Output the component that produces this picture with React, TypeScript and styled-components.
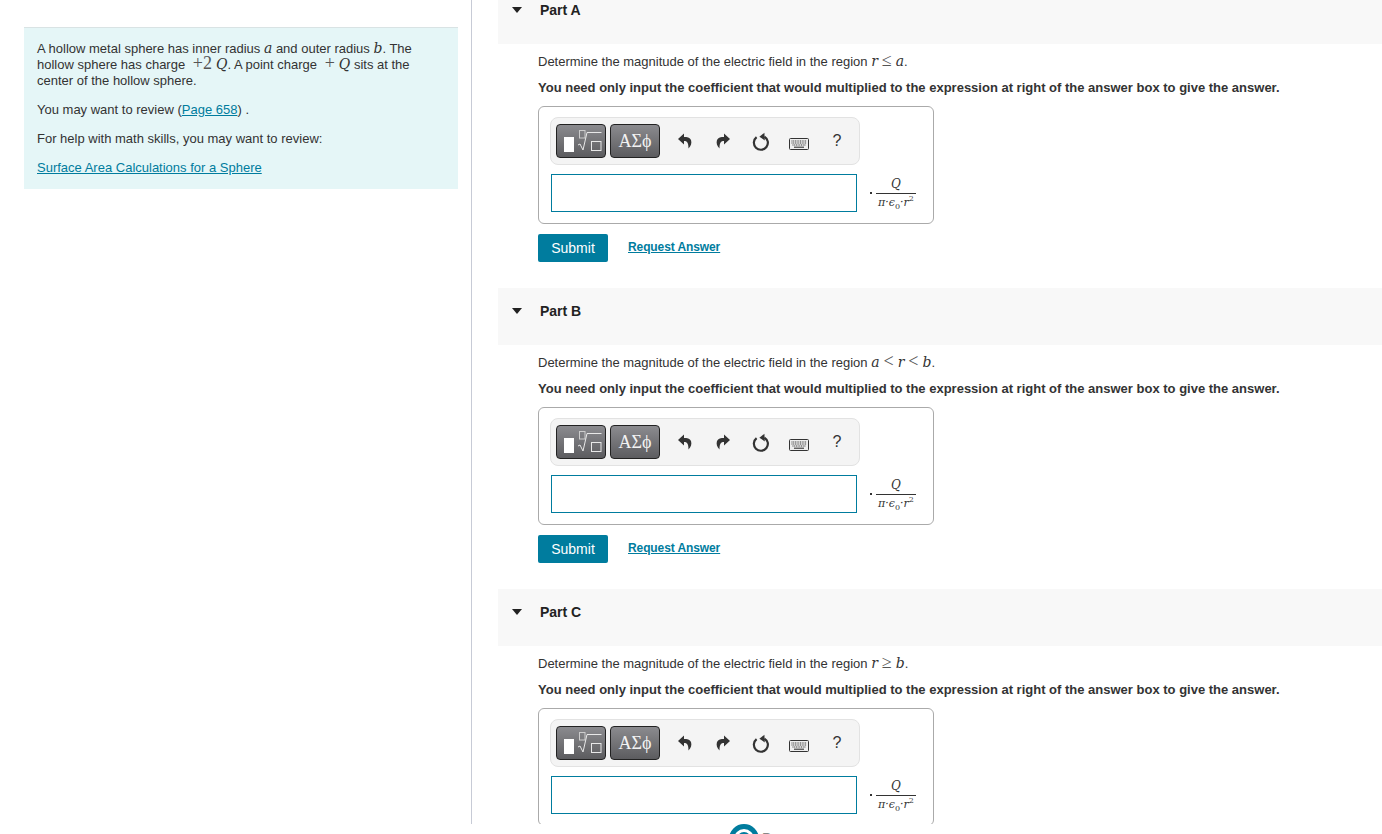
import React from "react";
import styled, { createGlobalStyle } from "styled-components";

const GlobalStyle = createGlobalStyle`
  html, body {
    margin: 0;
    height: 834px;
    overflow: hidden;
    background: #fff;
  }
  body {
    font-family: "Liberation Sans", Arial, sans-serif;
    font-size: 13px;
    color: #333;
  }
`;

const Main = styled.div`
  display: flex;
  height: 824px;
  overflow: hidden;
`;

const Sidebar = styled.aside`
  width: 472px;
  flex: none;
  box-sizing: border-box;
  padding: 27px 13px 0 24px;
  border-right: 1px solid #c7cbd6;
`;

const InfoPanel = styled.div`
  background: #e5f6f7;
  border-top: 1px solid #d9e3e4;
  padding: 13px 26px 13px 13px;
  line-height: 16px;
  font-size: 13px;
  color: #333;
`;

const InfoText = styled.p`
  margin: 0 0 13px;
  &:last-child {
    margin-bottom: 0;
  }
`;

const Link = styled.a`
  color: #007c9e;
  text-decoration: underline;
`;

const Content = styled.main`
  flex: 1;
  min-width: 0;
  padding-left: 26px;
  margin-top: -13px;
`;

const Section = styled.section`
  padding-bottom: 26px;
`;

const PartHeader = styled.div`
  display: flex;
  align-items: flex-start;
  height: 57px;
  box-sizing: border-box;
  padding: 15px 0 0 14px;
  background: #f8f8f8;
`;

const Caret = styled.span`
  width: 0;
  height: 0;
  margin-top: 5px;
  border-left: 5px solid transparent;
  border-right: 5px solid transparent;
  border-top: 6px solid #222;
`;

const PartTitle = styled.h2`
  margin: 0 0 0 18px;
  font-size: 14px;
  line-height: 16px;
  font-weight: 700;
  color: #222;
`;

const PartBody = styled.div`
  padding: 10px 0 0 40px;
`;

const Prompt = styled.p`
  margin: 0;
  line-height: 16px;
  font-size: 13px;
`;

const Instruction = styled.p`
  margin: 10px 0 10px;
  line-height: 16px;
  font-size: 13px;
  font-weight: 700;
`;

const Var = styled.span`
  font-family: "DejaVu Serif", "Liberation Serif", serif;
  font-style: italic;
  font-size: 14px;
  line-height: 0;
`;

const Rel = styled.span`
  font-family: "Liberation Serif", "DejaVu Serif", serif;
  font-size: 18px;
  line-height: 0;
  margin: 0 4px;
  color: #555;
`;

const AnswerBox = styled.div`
  width: 396px;
  height: 118px;
  box-sizing: border-box;
  padding: 10px 11px;
  border: 1px solid #aaa;
  border-radius: 6px;
`;

const Toolbar = styled.div`
  display: flex;
  align-items: center;
  width: 310px;
  height: 48px;
  box-sizing: border-box;
  padding-left: 5px;
  background: #f4f4f4;
  border: 1px solid #e2e2e2;
  border-radius: 8px;
`;

const ToolButton = styled.button`
  display: flex;
  align-items: center;
  justify-content: center;
  width: 50px;
  height: 34px;
  padding: 0;
  margin-right: 4px;
  border: 1px solid #222;
  border-radius: 4px;
  background: linear-gradient(#8b8b8f, #5c5c5f);
  color: #f2f2f2;
  font-family: "Liberation Serif", "DejaVu Serif", serif;
  font-size: 18px;
`;

const ToolIcon = styled.span`
  display: flex;
  align-items: center;
  justify-content: center;
  width: 38px;
  height: 34px;
  color: #333;
  font-size: 16px;
  &:nth-of-type(1) {
    margin-left: 2px;
  }
`;

const KeyboardSvg = styled.svg`
  margin-top: 5px;
`;

const AnswerRow = styled.div`
  display: flex;
  align-items: center;
  margin-top: 9px;
`;

const AnswerInput = styled.input`
  width: 306px;
  height: 38px;
  box-sizing: border-box;
  margin: 0 0 0 1px;
  border: 1px solid #007c9e;
  background: #fff;
`;

const Unit = styled.div`
  display: flex;
  align-items: center;
  margin-left: 13px;
  font-family: "DejaVu Serif", "Liberation Serif", serif;
  color: #333;
`;

const Dot = styled.span`
  width: 2px;
  height: 2px;
  margin-right: 4px;
  background: #333;
`;

const Fraction = styled.div`
  display: flex;
  flex-direction: column;
  align-items: center;
  width: 40px;
`;

const Numerator = styled.span`
  font-style: italic;
  font-size: 12px;
  line-height: 17px;
  border-bottom: 1px solid #333;
  width: 100%;
  text-align: center;
`;

const Denominator = styled.span`
  font-style: italic;
  font-size: 11px;
  line-height: 17px;
  white-space: nowrap;
  sub, sup {
    font-style: normal;
    font-size: 8px;
    line-height: 0;
  }
`;

const Actions = styled.div`
  display: flex;
  align-items: center;
  gap: 20px;
  margin-top: 10px;
`;

const Submit = styled.button`
  width: 70px;
  height: 28px;
  padding: 0;
  border: 0;
  border-radius: 2px;
  background: #007c9e;
  color: #fff;
  font-family: "Liberation Sans", Arial, sans-serif;
  font-size: 14px;
`;

const RequestLink = styled(Link)`
  font-size: 12px;
  font-weight: 700;
  letter-spacing: -0.1px;
  margin-top: -2px;
`;

const Footer = styled.footer`
  display: flex;
  gap: 3px;
  height: 10px;
  overflow: hidden;
  padding-left: 729px;
`;

const FooterName = styled.span`
  font-size: 14px;
  line-height: 16px;
  margin-top: 6px;
  color: #888;
`;

const UndoIcon = ({ flip }: { flip?: boolean }) => (
  <svg width="14" height="16" viewBox="0 0 14 16" style={flip ? { transform: "scaleX(-1)" } : undefined}>
    <path
      fill="currentColor"
      d="M6 0.5 0 6 6 11.5V8C9 8 10.5 9.5 10.5 15.5 13 13 14 10 13 7 12 4.5 9 4 6 4Z"
    />
  </svg>
);

const RefreshIcon = () => (
  <svg width="18" height="19" viewBox="0 0 18 19">
    <path d="M12.4 4.7A7 7 0 1 1 4.6 5.2" fill="none" stroke="currentColor" strokeWidth="2.2" />
    <path d="M7.4 4.8 12.4 0.8 12.8 8.4Z" fill="currentColor" />
  </svg>
);

const KeyboardIcon = () => (
  <KeyboardSvg width="20" height="12" viewBox="0 0 20 12">
    <rect x="0.5" y="0.5" width="19" height="11" rx="1" fill="#eee" stroke="#333" />
    <path
      d="M2.5 3h15M2.5 5h15M3.5 7h13"
      stroke="#333"
      strokeWidth="1.2"
      strokeDasharray="1 .7"
      fill="none"
    />
    <path d="M5 9.2h10" stroke="#333" strokeWidth="1.1" fill="none" />
  </KeyboardSvg>
);

const TemplateIcon = () => (
  <svg width="46" height="28" viewBox="0 0 46 28">
    <rect x="6" y="10" width="10" height="15" fill="#fff" />
    <rect x="21.5" y="3.5" width="5.5" height="7.5" fill="none" stroke="#ccc" />
    <path d="M20 18 22 17 25 23 29 5.5H43.5" fill="none" stroke="#e8e8e8" />
    <rect x="33.5" y="14.5" width="9.5" height="9" fill="none" stroke="#e8e8e8" />
  </svg>
);

const PearsonLogo = () => (
  <svg width="30" height="30" viewBox="0 0 30 30">
    <circle cx="15" cy="15" r="12.5" fill="none" stroke="#007c9e" strokeWidth="5" />
    <circle cx="15" cy="15" r="5.5" fill="none" stroke="#007c9e" strokeWidth="3" />
  </svg>
);

type PartProps = {
  name: string;
  region: React.ReactNode;
};

const instruction =
  "You need only input the coefficient that would multiplied to the expression at right of the answer box to give the answer.";

function Part({ name, region }: PartProps) {
  return (
    <Section>
      <PartHeader>
        <Caret />
        <PartTitle>{name}</PartTitle>
      </PartHeader>
      <PartBody>
        <Prompt>Determine the magnitude of the electric field in the region {region}.</Prompt>
        <Instruction>{instruction}</Instruction>
        <AnswerBox>
          <Toolbar>
            <ToolButton>
              <TemplateIcon />
            </ToolButton>
            <ToolButton>ΑΣϕ</ToolButton>
            <ToolIcon>
              <UndoIcon />
            </ToolIcon>
            <ToolIcon>
              <UndoIcon flip />
            </ToolIcon>
            <ToolIcon>
              <RefreshIcon />
            </ToolIcon>
            <ToolIcon>
              <KeyboardIcon />
            </ToolIcon>
            <ToolIcon>?</ToolIcon>
          </Toolbar>
          <AnswerRow>
            <AnswerInput />
            <Unit>
              <Dot />
              <Fraction>
                <Numerator>Q</Numerator>
                <Denominator>
                  π·ϵ<sub>0</sub>·r<sup>2</sup>
                </Denominator>
              </Fraction>
            </Unit>
          </AnswerRow>
        </AnswerBox>
        <Actions>
          <Submit>Submit</Submit>
          <RequestLink href="#">Request Answer</RequestLink>
        </Actions>
      </PartBody>
    </Section>
  );
}

export default function App() {
  return (
    <>
      <GlobalStyle />
      <Main>
        <Sidebar>
          <InfoPanel>
            <InfoText>
              A hollow metal sphere has inner radius <Var>a</Var> and outer radius <Var>b</Var>. The hollow sphere
              has charge <Rel>+2</Rel>
              <Var>Q</Var>. A point charge <Rel>+</Rel>
              <Var>Q</Var> sits at the center of the hollow sphere.
            </InfoText>
            <InfoText>
              You may want to review (<Link href="#">Page 658</Link>) .
            </InfoText>
            <InfoText>For help with math skills, you may want to review:</InfoText>
            <InfoText>
              <Link href="#">Surface Area Calculations for a Sphere</Link>
            </InfoText>
          </InfoPanel>
        </Sidebar>
        <Content>
          <Part
            name="Part A"
            region={
              <>
                <Var>r</Var>
                <Rel>≤</Rel>
                <Var>a</Var>
              </>
            }
          />
          <Part
            name="Part B"
            region={
              <>
                <Var>a</Var>
                <Rel>&lt;</Rel>
                <Var>r</Var>
                <Rel>&lt;</Rel>
                <Var>b</Var>
              </>
            }
          />
          <Part
            name="Part C"
            region={
              <>
                <Var>r</Var>
                <Rel>≥</Rel>
                <Var>b</Var>
              </>
            }
          />
        </Content>
      </Main>
      <Footer>
        <PearsonLogo />
        <FooterName>Pearson</FooterName>
      </Footer>
    </>
  );
}
